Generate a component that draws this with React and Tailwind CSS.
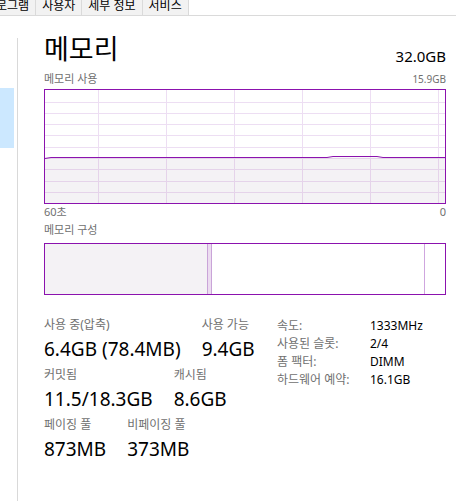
import React from "react";

const TABS = [
  { label: "프로그램", first: true },
  { label: "사용자" },
  { label: "세부 정보" },
  { label: "서비스" },
];

const GRID_X = [53.5, 121.5, 189.5, 257.5, 325.5, 393.5];
const GRID_Y = [12.5, 23.5, 34.5, 45.5, 57.5, 68.5, 79.5, 91.5, 102.5];
const FILL_TOP = 67.5;
const W = 400;
const H = 113;

function UsageGraph() {
  return (
    <svg width={W} height={H} className="block">
      <rect x="0" y={FILL_TOP} width={W} height={H - FILL_TOP} fill="#f4f2f5" />
      {GRID_X.map((x) => (
        <g key={x}>
          <line x1={x} x2={x} y1="0" y2={FILL_TOP} stroke="#eddef3" />
          <line x1={x} x2={x} y1={FILL_TOP} y2={H} stroke="#e5d3ea" />
        </g>
      ))}
      {GRID_Y.map((y) => (
        <line key={y} x1="0" x2={W} y1={y} y2={y} stroke={y < FILL_TOP ? "#eddef3" : "#e5d3ea"} />
      ))}
      <path
        d="M0 68.5 L6 67.5 L282 67.5 L288 66.5 L332 66.5 L338 67.5 L400 67.5"
        fill="none"
        stroke="#8b12ae"
        strokeWidth="1"
      />
    </svg>
  );
}

function Stat({ label, value }) {
  return (
    <div className="shrink-0">
      <div className="text-[12px] leading-[16px] text-[#707070] whitespace-nowrap">{label}</div>
      <div className="mt-[3px] text-[19px] leading-[26px] text-black whitespace-nowrap">{value}</div>
    </div>
  );
}

const SPECS = [
  ["속도:", "1333MHz"],
  ["사용된 슬롯:", "2/4"],
  ["폼 팩터:", "DIMM"],
  ["하드웨어 예약:", "16.1GB"],
];

export default function App() {
  return (
    <div className="w-[456px] h-[501px] bg-white overflow-hidden flex flex-col font-['Noto_Sans','Noto_Sans_CJK_KR',sans-serif]">
      {/* tab strip */}
      <div className="h-[16px] shrink-0 flex border-b border-[#dadada] overflow-hidden">
        {TABS.map((t) => (
          <div
            key={t.label}
            className={`${t.first ? "ml-[-21px]" : ""} h-full px-[6px] bg-[#f2f2f2] border-r border-[#dadada] text-[12px] leading-[12px] text-black whitespace-nowrap`}
          >
            {t.label}
          </div>
        ))}
      </div>

      <div className="flex-1 flex min-h-0">
        {/* left list pane */}
        <div className="w-[18px] shrink-0 pt-[22px] flex flex-col">
          <div className="flex-1 border-r border-[#d9d9d9]">
            <div className="mt-[50px] h-[60px] w-[14px] bg-[#cce8ff]" />
          </div>
        </div>

        {/* memory panel */}
        <div className="pl-[26px] w-[428px] flex flex-col">
          <div className="w-[402px] mt-[17px] flex items-end justify-between">
            <div className="text-[27px] leading-[32px] text-black">메모리</div>
            <div className="text-[15px] leading-[17px] text-black">32.0GB</div>
          </div>

          <div className="w-[402px] mt-[7px] h-[14px] flex items-baseline justify-between text-[#707070]">
            <span className="text-[11px] leading-[14px]">메모리 사용</span>
            <span className="text-[10px] leading-[14px]">15.9GB</span>
          </div>

          <div className="mt-[3px] w-[402px] border border-[#8b12ae] bg-white">
            <UsageGraph />
          </div>

          <div className="w-[402px] mt-[1px] h-[14px] flex items-baseline justify-between text-[11px] leading-[14px] text-[#707070]">
            <span>60초</span>
            <span>0</span>
          </div>

          <div className="mt-[4px] text-[11px] leading-[14px] text-[#707070]">메모리 구성</div>

          <div className="mt-[6px] w-[402px] h-[52px] border border-[#8b12ae] flex">
            <div className="w-[163px] bg-[#f4f2f5] border-r border-[#c9a4d8]" />
            <div className="w-[4px] bg-[#ecdcf0] border-r border-[#c9a4d8]" />
            <div className="flex-1 bg-white border-r border-[#cfa6df]" />
            <div className="w-[20px] bg-white" />
          </div>

          <div className="mt-[22px] w-[402px] flex items-start">
            <div className="w-[233px] shrink-0 flex flex-col gap-[5px]">
              <div className="flex gap-[21px]">
                <Stat label="사용 중(압축)" value="6.4GB (78.4MB)" />
                <Stat label="사용 가능" value="9.4GB" />
              </div>
              <div className="flex gap-[21px]">
                <Stat label="커밋됨" value="11.5/18.3GB" />
                <Stat label="캐시됨" value="8.6GB" />
              </div>
              <div className="flex gap-[21px]">
                <Stat label="페이징 풀" value="873MB" />
                <Stat label="비페이징 풀" value="373MB" />
              </div>
            </div>

            <div className="flex-1 grid grid-cols-[93px_1fr] content-start text-[12px] leading-[18px]">
              {SPECS.map(([k, v]) => (
                <React.Fragment key={k}>
                  <div className="text-[#707070] whitespace-nowrap">{k}</div>
                  <div className="text-black whitespace-nowrap">{v}</div>
                </React.Fragment>
              ))}
            </div>
          </div>
        </div>
      </div>
    </div>
  );
}
